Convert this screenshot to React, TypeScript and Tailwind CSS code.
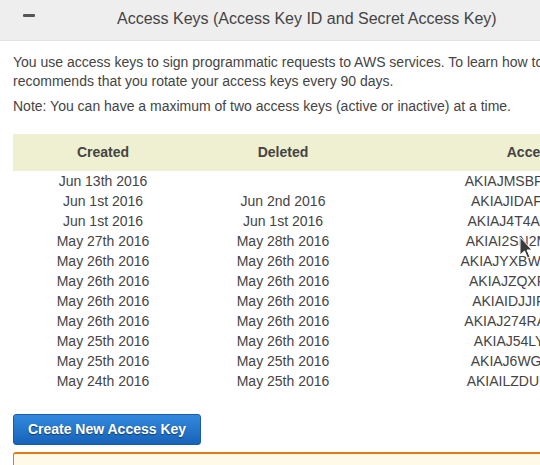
import React from "react";

const rows: [string, string, string][] = [
  ["Jun 13th 2016", "", "AKIAJMSBPQ4XWZ7LKR2A"],
  ["Jun 1st 2016", "Jun 2nd 2016", "AKIAJIDAFV3NQ6TZ2K5B"],
  ["Jun 1st 2016", "Jun 1st 2016", "AKIAJ4T4ANW7QX2LB3ZC"],
  ["May 27th 2016", "May 28th 2016", "AKIAI2SN2MRT5VQB7XWD"],
  ["May 26th 2016", "May 26th 2016", "AKIAJYXBWMQ2WZ6NVKOE"],
  ["May 26th 2016", "May 26th 2016", "AKIAJZQXFL5T3KB7N2QF"],
  ["May 26th 2016", "May 26th 2016", "AKIAIDJJIFT6Q2LZ4WNG"],
  ["May 26th 2016", "May 26th 2016", "AKIAJ274RAMW5QX3BNKH"],
  ["May 25th 2016", "May 26th 2016", "AKIAJ54LYTQ3N7V2BLZI"],
  ["May 25th 2016", "May 25th 2016", "AKIAJ6WGIZ2QX5LTN3BJ"],
  ["May 24th 2016", "May 25th 2016", "AKIAILZDUK7QW2VN5XBK"],
];

export default function App() {
  return (
    <div
      className="relative w-[540px] h-[465px] overflow-hidden bg-white text-[#444]"
      style={{ fontFamily: '"Liberation Sans", Arial, sans-serif' }}
    >
      <div className="w-[900px]">
        {/* Header */}
        <div className="flex h-[41px] items-center border-b border-[#e2e2e2] bg-[#eeeeee]">
          <div className="ml-[23px] mt-[-9px] h-[3px] w-[12px] rounded-[1px] bg-[#555]" />
          <div className="ml-[82px] mt-[-3px] text-[16px] leading-[20px] text-[#444]">
            Access Keys (Access Key ID and Secret Access Key)
          </div>
        </div>

        {/* Body */}
        <div className="pl-[13px] pt-[12px]">
          <p className="whitespace-nowrap text-[14px] leading-[19px]">
            You use access keys to sign programmatic requests to AWS services. To learn how to create
            your access keys, see Managing Access Keys. For your protection, AWS
            <br />
            recommends that you rotate your access keys every 90 days.
          </p>
          <p className="mt-[6px] whitespace-nowrap text-[14px] leading-[19px]">
            Note: You can have a maximum of two access keys (active or inactive) at a time.
          </p>

          {/* Table */}
          <div className="mt-[18px] w-[800px]">
            <div className="flex h-[37px] items-center bg-[#efefd1] text-[14px] font-bold">
              <div className="w-[180px] text-center">Created</div>
              <div className="w-[180px] text-center">Deleted</div>
              <div className="w-[364px] text-center">Access Key ID</div>
            </div>
            {rows.map((r, i) => (
              <div key={i} className="flex h-[20px] items-center text-[14px] leading-[20px]">
                <div className="w-[180px] text-center">{r[0]}</div>
                <div className="w-[180px] text-center">{r[1]}</div>
                <div className="w-[364px] text-center">{r[2]}</div>
              </div>
            ))}
          </div>

          {/* Button */}
          <button
            className="mt-[23px] flex h-[31px] w-[188px] items-center justify-center rounded-[3px] border border-[#1b5aa6] bg-gradient-to-b from-[#3389dd] to-[#1763b9] text-[14px] font-bold text-white"
            style={{ textShadow: "0 1px 1px rgba(0,0,0,0.5)" }}
          >
            Create New Access Key
          </button>

          {/* Orange box */}
          <div className="mt-[7px] h-[30px] rounded-tl-[3px] border-l border-t-2 border-[#e47911] bg-[#fffae8]" />
        </div>
      </div>

      {/* Mouse cursor */}
      <svg
        className="absolute left-[519px] top-[236px]"
        width="14"
        height="24"
        viewBox="0 0 14 24"
      >
        <path
          d="M1 1 L1 19 L5.5 15 L8.5 22 L11 21 L8 14 L13 14 Z"
          fill="#3a3a3a"
          stroke="#ffffff"
          strokeWidth="1"
          strokeLinejoin="round"
        />
      </svg>
    </div>
  );
}
